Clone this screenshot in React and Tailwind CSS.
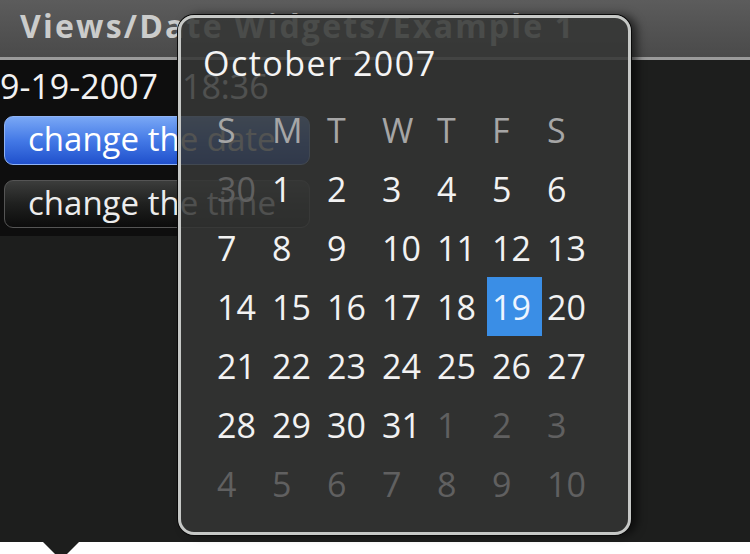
const weekdays = ["S", "M", "T", "W", "T", "F", "S"];

// each week: [day, inMonth]
const weeks = [
  [[30, false], [1, true], [2, true], [3, true], [4, true], [5, true], [6, true]],
  [[7, true], [8, true], [9, true], [10, true], [11, true], [12, true], [13, true]],
  [[14, true], [15, true], [16, true], [17, true], [18, true], [19, true], [20, true]],
  [[21, true], [22, true], [23, true], [24, true], [25, true], [26, true], [27, true]],
  [[28, true], [29, true], [30, true], [31, true], [1, false], [2, false], [3, false]],
  [[4, false], [5, false], [6, false], [7, false], [8, false], [9, false], [10, false]],
];

function DayCell({ day, inMonth }) {
  const selected = inMonth && day === 19;
  let cls = "text-[#f2f2f2]";
  if (!inMonth) cls = "text-[#606060]";
  if (selected) cls = "bg-[#3a8ee6] text-[#eef5ff]";
  return (
    <div className={`h-[59px] flex items-center pl-[5px] ${cls}`}>
      {day}
    </div>
  );
}

function CalendarDialog() {
  return (
    <div className="absolute left-[178px] top-[15px] w-[453px] h-[520px] rounded-[16px] border-[3px] border-[#c6c8c6] bg-[#343534]/85 shadow-[0_0_0_1px_#0a0a0a,6px_0_10px_rgba(0,0,0,0.6)]">
      <div className="pt-[28px] pl-[22px] text-[34px] leading-[34px] tracking-[1.5px] text-[#f4f4f4]">
        October 2007
      </div>
      <div className="mt-[20px] ml-[31px] grid grid-cols-[repeat(7,55px)] text-[34px] leading-[34px]">
        {weekdays.map((d, i) => (
          <div key={i} className="h-[59px] flex items-center pl-[5px] text-[#a6a6a6]">
            {d}
          </div>
        ))}
        {weeks.map((week, w) =>
          week.map(([day, inMonth], i) => (
            <DayCell key={`${w}-${i}`} day={day} inMonth={inMonth} />
          ))
        )}
      </div>
    </div>
  );
}

export default function App() {
  return (
    <div className="relative w-[750px] h-[554px] overflow-hidden bg-white font-['Open_Sans',sans-serif]">
      <div className="h-[542px] bg-[#1d1e1d] flex flex-col">
        <header className="h-[60px] shrink-0 bg-gradient-to-b from-[#5c5c5c] to-[#4a4a4a] border-b-[3px] border-[#9a9a9a] pl-[20px] pb-[6px] flex items-center text-[32px] font-bold text-[#cbcccb] tracking-[2.2px] whitespace-nowrap">
          Views/Date Widgets/Example 1
        </header>
        <div className="w-[178px] bg-[#0e0e0e] pb-[8px]">
          <div className="w-max h-[52px] flex items-center gap-[24px] text-[34px] leading-[34px] text-[#f2f2f2]">
            <span>9-19-2007</span>
            <span>18:36</span>
          </div>
          <button className="mt-[4px] ml-[4px] w-[306px] h-[49px] rounded-[9px] border border-[#8fb3f5] bg-gradient-to-b from-[#79a7f5] via-[#4479e6] to-[#2050cc] text-left pl-[23px] text-[33px] leading-[33px] text-white pb-[4px] whitespace-nowrap">
            change the date
          </button>
          <button className="mt-[15px] ml-[4px] w-[306px] h-[48px] rounded-[9px] border border-[#555] bg-gradient-to-b from-[#3c3d3c] via-[#1f201f] to-[#0c0c0c] text-left pl-[23px] text-[33px] leading-[33px] text-[#ececec] pb-[4px] whitespace-nowrap">
            change the time
          </button>
        </div>
      </div>
      <div className="h-[12px] bg-white pl-[43px]">
        <svg width="36" height="12" viewBox="0 0 36 12">
          <polygon points="0,0 36,0 18,18" fill="#1d1e1d" />
        </svg>
      </div>
      <CalendarDialog />
    </div>
  );
}
